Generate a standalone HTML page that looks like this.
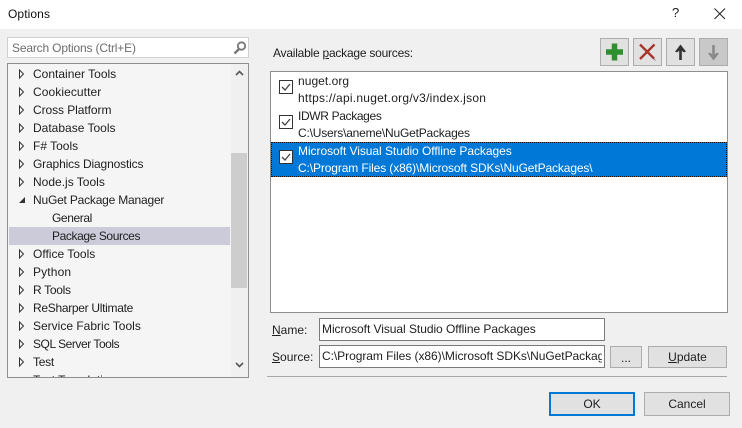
<!DOCTYPE html>
<html><head><meta charset="utf-8">
<style>
html,body{margin:0;padding:0;width:742px;height:428px;overflow:hidden;background:#f0f0f0}
body{position:relative;font-family:"Liberation Sans",sans-serif;font-size:12px;color:#1e1e1e}
.a{position:absolute;box-sizing:border-box}
.t{position:absolute;white-space:nowrap;line-height:18px;height:18px}
u{text-decoration:underline}
.btn{position:absolute;box-sizing:border-box;background:#e1e1e1;border:1px solid #adadad;text-align:center;color:#1e1e1e}
.ck{position:absolute;left:279px;width:14px;height:14px;box-sizing:border-box;background:#fff;border:1px solid #333}
.tb{position:absolute;width:29px;height:28px;box-sizing:border-box;border:1px solid #adadad;background:#e1e1e1}
</style></head><body>
<div class="a" style="left:0;top:0;width:742px;height:29px;background:#fff"></div>
<div class="t" style="left:8px;top:5px;color:#111;letter-spacing:.1px">Options</div>
<div class="t" style="left:672px;top:4px;font-size:13px;color:#222">?</div>
<svg class="a" style="left:714px;top:8px" width="12" height="12"><path d="M.5.5l10.500 10.500M11 .5L.5 11" stroke="#222" fill="none"/></svg>

<!-- search -->
<div class="a" style="left:7px;top:37px;width:242px;height:21px;background:#fff;border:1px solid #cfcfcf"></div>
<div class="t" style="left:12px;top:39px;color:#6d6d6d;letter-spacing:-.17px">Search Options (Ctrl+E)</div>
<svg class="a" style="left:232px;top:40px" width="16" height="15"><circle cx="9.500" cy="6" r="3.700" fill="none" stroke="#777" stroke-width="1.800"/><path d="M7 9l-4.500 4.500" stroke="#777" stroke-width="2.400"/></svg>

<!-- tree -->
<div class="a" style="left:7px;top:63px;width:242px;height:315px;background:#f5f5f5;border:1px solid #8e8e8e;overflow:hidden">
  <div class="a" style="left:223px;top:0;width:17px;height:313px;background:#f0f0f0"></div>
  <div class="a" style="left:223px;top:89px;width:16px;height:135px;background:#cdcdcd"></div>
  <div class="a" style="left:1px;top:163px;width:221px;height:18px;background:#cbcbd9"></div>
  <div class="t" style="left:25px;top:307px">Text Templating</div>
  <svg class="a" style="left:227px;top:6px" width="10" height="6"><path d="M1 5l3.500-3.500L8 5" fill="none" stroke="#555" stroke-width="1.600"/></svg>
  <svg class="a" style="left:227px;top:298px" width="10" height="6"><path d="M1 1l3.500 3.500L8 1" fill="none" stroke="#555" stroke-width="1.600"/></svg>
</div>
<div class="t" style="left:33px;top:65px">Container Tools</div>
<div class="t" style="left:33px;top:83px;letter-spacing:.08px">Cookiecutter</div>
<div class="t" style="left:33px;top:101px;letter-spacing:-.07px">Cross Platform</div>
<div class="t" style="left:33px;top:119px">Database Tools</div>
<div class="t" style="left:33px;top:137px">F# Tools</div>
<div class="t" style="left:33px;top:155px;letter-spacing:-.15px">Graphics Diagnostics</div>
<div class="t" style="left:33px;top:173px">Node.js Tools</div>
<div class="t" style="left:33px;top:191px;letter-spacing:-.2px">NuGet Package Manager</div>
<div class="t" style="left:52px;top:209px;letter-spacing:-.4px">General</div>
<div class="t" style="left:52px;top:227px;letter-spacing:-.4px">Package Sources</div>
<div class="t" style="left:33px;top:245px">Office Tools</div>
<div class="t" style="left:33px;top:263px;letter-spacing:.15px">Python</div>
<div class="t" style="left:33px;top:281px;letter-spacing:-.3px">R Tools</div>
<div class="t" style="left:33px;top:299px;letter-spacing:-.3px">ReSharper Ultimate</div>
<div class="t" style="left:33px;top:317px">Service Fabric Tools</div>
<div class="t" style="left:33px;top:335px;letter-spacing:-.45px">SQL Server Tools</div>
<div class="t" style="left:33px;top:353px;letter-spacing:-.25px">Test</div>

<svg class="a" style="left:18px;top:65px" width="10" height="306" fill="none" stroke="#333">
  <path d="M1.500 5v8l4-4z"/>
  <path d="M1.500 23v8l4-4z"/>
  <path d="M1.500 41v8l4-4z"/>
  <path d="M1.500 59v8l4-4z"/>
  <path d="M1.500 77v8l4-4z"/>
  <path d="M1.500 95v8l4-4z"/>
  <path d="M1.500 113v8l4-4z"/>
  <path d="M1 138h6v-6z" fill="#333" stroke="none"/>
  <path d="M1.500 185v8l4-4z"/>
  <path d="M1.500 203v8l4-4z"/>
  <path d="M1.500 221v8l4-4z"/>
  <path d="M1.500 239v8l4-4z"/>
  <path d="M1.500 257v8l4-4z"/>
  <path d="M1.500 275v8l4-4z"/>
  <path d="M1.500 293v8l4-4z"/>
</svg>

<!-- right header -->
<div class="t" style="left:273px;top:44px;letter-spacing:-.23px">Available <u>p</u>ackage sources:</div>
<div class="tb" style="left:600px;top:38px"><svg width="27" height="26"><path d="M13.500 4.500v17M5 13h17" stroke="#2f8f2f" stroke-width="5.500"/></svg></div>
<div class="tb" style="left:633px;top:38px"><svg width="27" height="26"><path d="M6.500 6l14 14.500" stroke="#8a8a8a" stroke-width="1" transform="translate(1 1)"/><path d="M6 5.500l14 14M20.500 5.500l-14.500 14.500" stroke="#a5352a" stroke-width="2.300"/></svg></div>
<div class="tb" style="left:666px;top:38px"><svg width="27" height="26"><path d="M13.500 21V10" stroke="#333" stroke-width="2.600"/><path d="M8.500 12.500l5-6.500 5 6.500-1.500 .5-3.500-2.500-3.500 2.500z" fill="#333" stroke="#333" stroke-width=".6"/></svg></div>
<div class="tb" style="left:699px;top:38px;background:#c8c8c8"><svg width="27" height="26"><path d="M13.500 6v11" stroke="#8a8a8a" stroke-width="2.600"/><path d="M8.500 14.500l5 6.500 5-6.500-1.500-.5-3.500 2.500-3.500-2.500z" fill="#8a8a8a" stroke="#8a8a8a" stroke-width=".6"/></svg></div>

<!-- list -->
<div class="a" style="left:270px;top:71px;width:458px;height:242px;background:#fff;border:1px solid #8e8e8e"></div>
<div class="a" style="left:271px;top:142px;width:456px;height:35px;background:#0078d7;border:1px dotted #111"></div>
<div class="ck" style="top:80px"><svg class="a" style="left:0;top:0" width="12" height="12"><path d="M2 6l3 3 5-6" fill="none" stroke="#444" stroke-width="1.300"/></svg></div>
<div class="ck" style="top:115px"><svg class="a" style="left:0;top:0" width="12" height="12"><path d="M2 6l3 3 5-6" fill="none" stroke="#444" stroke-width="1.300"/></svg></div>
<div class="ck" style="top:150px"><svg class="a" style="left:0;top:0" width="12" height="12"><path d="M2 6l3 3 5-6" fill="none" stroke="#444" stroke-width="1.300"/></svg></div>
<div class="t" style="left:298px;top:72px;letter-spacing:.05px">nuget.org</div>
<div class="t" style="left:298px;top:89px;letter-spacing:.25px">https://api.nuget.org/v3/index.json</div>
<div class="t" style="left:298px;top:107px;letter-spacing:-.35px">IDWR Packages</div>
<div class="t" style="left:298px;top:124px;letter-spacing:-.2px">C:\Users\aneme\NuGetPackages</div>
<div class="t" style="left:298px;top:142px;color:#fff;letter-spacing:-.05px">Microsoft Visual Studio Offline Packages</div>
<div class="t" style="left:298px;top:159px;color:#fff;letter-spacing:-.12px">C:\Program Files (x86)\Microsoft SDKs\NuGetPackages\</div>

<!-- form -->
<div class="t" style="left:272px;top:321px"><u>N</u>ame:</div>
<div class="t" style="left:272px;top:348px"><u>S</u>ource:</div>
<div class="a" style="left:319px;top:318px;width:286px;height:23px;background:#fff;border:1px solid #7a7a7a"></div>
<div class="t" style="left:322px;top:320px;letter-spacing:-.05px">Microsoft Visual Studio Offline Packages</div>
<div class="a" style="left:319px;top:345px;width:286px;height:23px;background:#fff;border:1px solid #7a7a7a"><div class="a" style="left:0;top:0;width:282px;height:21px;overflow:hidden"><div class="t" style="left:2px;top:1px;letter-spacing:-.05px">C:\Program Files (x86)\Microsoft SDKs\NuGetPackages\</div></div></div>
<div class="btn" style="left:610px;top:346px;width:32px;height:22px;line-height:22px">...</div>
<div class="btn" style="left:648px;top:346px;width:79px;height:22px;line-height:21px"><u>U</u>pdate</div>
<div class="a" style="left:267px;top:376px;width:460px;height:1px;background:#a8a8a8"></div>
<div class="btn" style="left:549px;top:392px;width:86px;height:24px;line-height:21px;border:2px solid #0078d7">OK</div>
<div class="btn" style="left:644px;top:392px;width:86px;height:24px;line-height:22px">Cancel</div>
</body></html>
